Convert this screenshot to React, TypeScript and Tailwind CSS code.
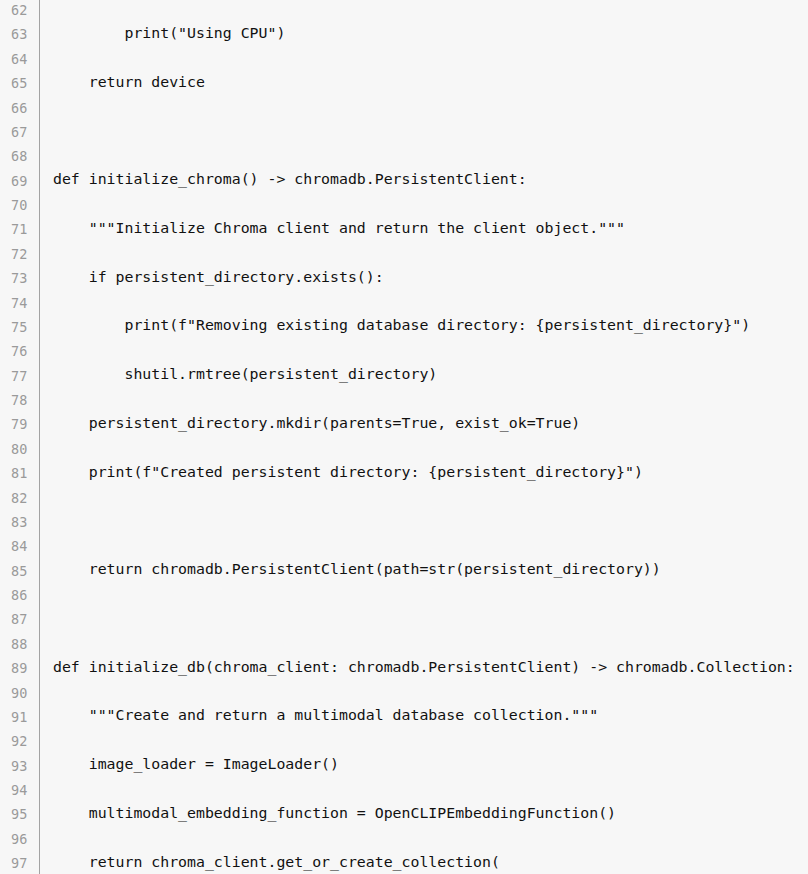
const START = 62;

const lines: string[] = [
  "",
  "        print(\"Using CPU\")",
  "",
  "    return device",
  "",
  "",
  "",
  "def initialize_chroma() -> chromadb.PersistentClient:",
  "",
  "    \"\"\"Initialize Chroma client and return the client object.\"\"\"",
  "",
  "    if persistent_directory.exists():",
  "",
  "        print(f\"Removing existing database directory: {persistent_directory}\")",
  "",
  "        shutil.rmtree(persistent_directory)",
  "",
  "    persistent_directory.mkdir(parents=True, exist_ok=True)",
  "",
  "    print(f\"Created persistent directory: {persistent_directory}\")",
  "",
  "",
  "",
  "    return chromadb.PersistentClient(path=str(persistent_directory))",
  "",
  "",
  "",
  "def initialize_db(chroma_client: chromadb.PersistentClient) -> chromadb.Collection:",
  "",
  "    \"\"\"Create and return a multimodal database collection.\"\"\"",
  "",
  "    image_loader = ImageLoader()",
  "",
  "    multimodal_embedding_function = OpenCLIPEmbeddingFunction()",
  "",
  "    return chroma_client.get_or_create_collection(",
];

export default function App() {
  return (
    <div className="w-[808px] h-[874px] overflow-hidden bg-[#f7f7f7]">
      <div className="flex -mt-[2px]">
        {/* gutter */}
        <div className="w-[40px] shrink-0 border-r border-[#a3a3a3] font-['DejaVu_Sans_Mono',monospace] text-[13.5px] text-[#9a9a9a]">
          {lines.map((_, i) => (
            <div key={i} className="h-[24.38px] flex items-center pl-[11px]">
              {START + i}
            </div>
          ))}
        </div>

        {/* code */}
        <div className="flex-1 pl-[13px] font-['DejaVu_Sans_Mono',monospace] text-[14.85px] text-[#111]">
          {lines.map((line, i) => (
            <div key={i} className="h-[24.38px] flex items-center pb-[3px] whitespace-pre">
              {line}
            </div>
          ))}
        </div>
      </div>
    </div>
  );
}
